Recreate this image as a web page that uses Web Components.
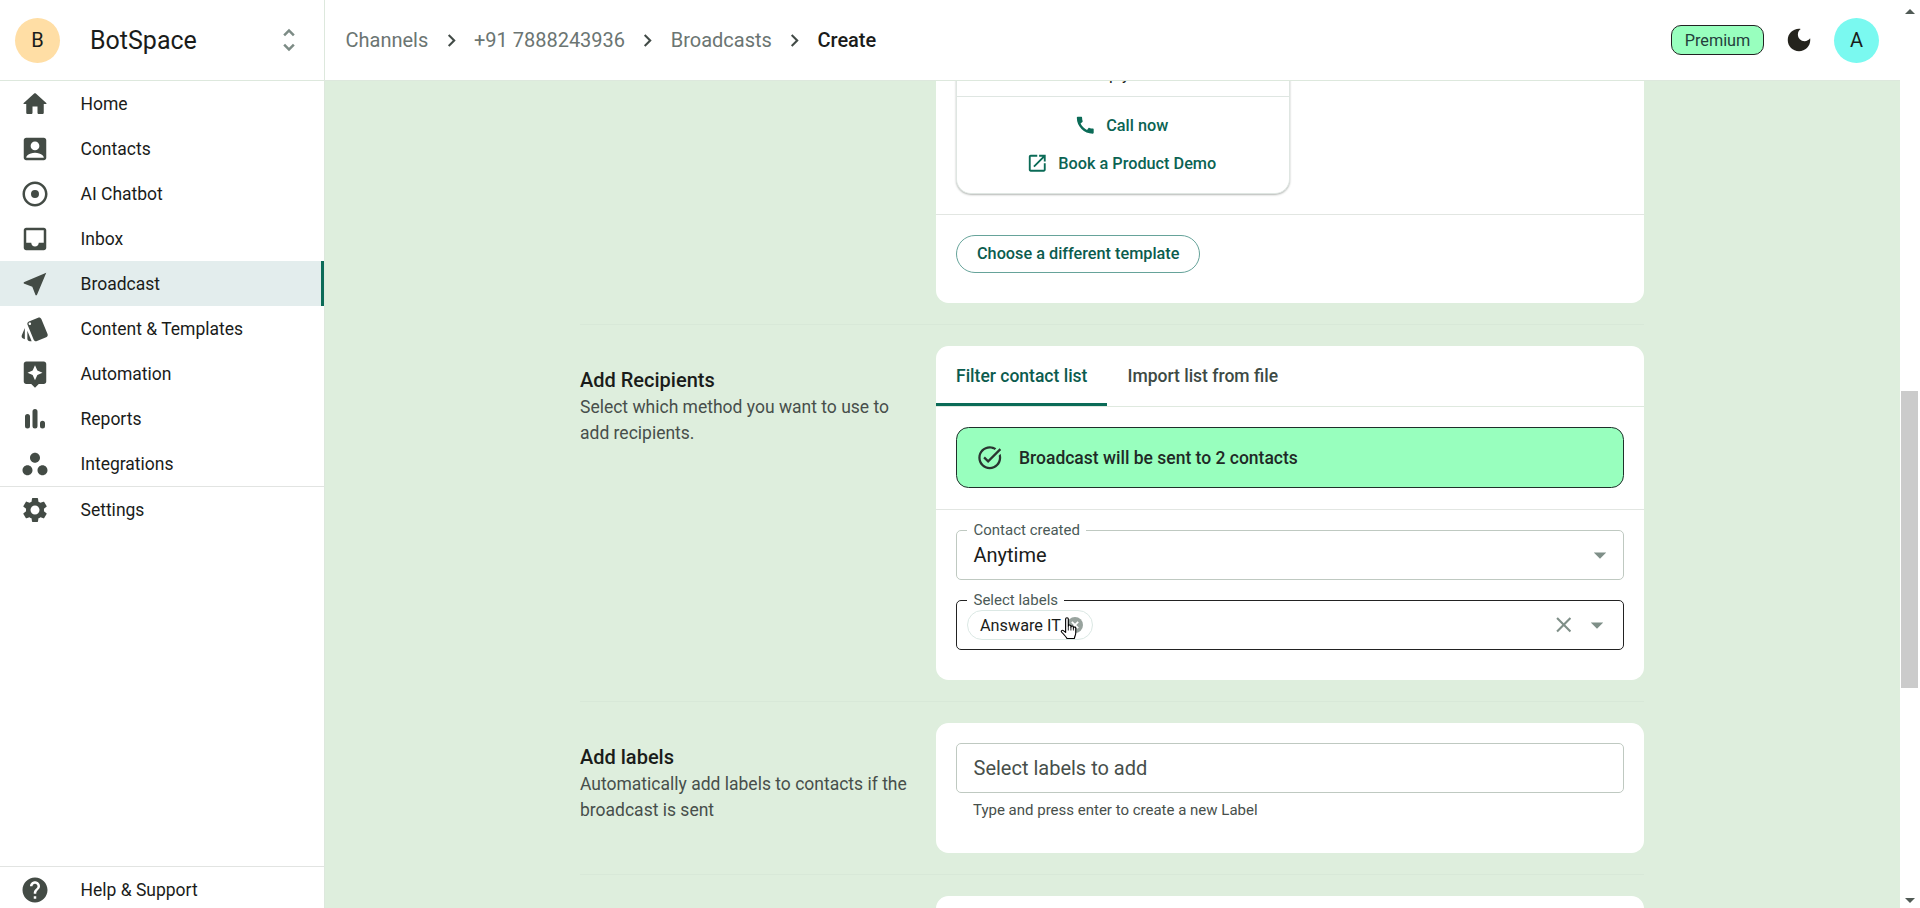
<!DOCTYPE html>
<html lang="en">
<head>
<meta charset="utf-8">
<title>BotSpace</title>
<style>
  html, body { margin: 0; height: 100%; overflow: hidden; }
  body { font-family: Roboto, "Liberation Sans", sans-serif; color: #1a1c1a; background: #fff; }
</style>
</head>
<body>
<bs-app>
  <bs-sidebar slot="sidebar"></bs-sidebar>
  <bs-topbar slot="topbar"></bs-topbar>
  <bs-scrollbar slot="scrollbar"></bs-scrollbar>

  <bs-section first>
    <bs-card flush>
      <bs-template-preview></bs-template-preview>
      <bs-divider></bs-divider>
      <bs-pad top="20" bottom="30"><bs-outline-button>Choose a different template</bs-outline-button></bs-pad>
    </bs-card>
  </bs-section>

  <bs-section heading="Add Recipients" description="Select which method you want to use to add recipients.">
    <bs-card>
      <bs-tabs></bs-tabs>
      <bs-pad top="20" bottom="21"><bs-banner>Broadcast will be sent to 2 contacts</bs-banner></bs-pad>
      <bs-divider></bs-divider>
      <bs-pad top="20" bottom="30">
        <bs-field label="Contact created" value="Anytime" arrow></bs-field>
        <bs-field label="Select labels" arrow clear focused spaced>
          <bs-chip>Answare IT</bs-chip>
        </bs-field>
      </bs-pad>
    </bs-card>
  </bs-section>

  <bs-section heading="Add labels" description="Automatically add labels to contacts if the broadcast is sent">
    <bs-card>
      <bs-pad top="20" bottom="33">
        <bs-field placeholder="Select labels to add" hint="Type and press enter to create a new Label"></bs-field>
      </bs-pad>
    </bs-card>
  </bs-section>

  <bs-section>
    <bs-card tall></bs-card>
  </bs-section>
</bs-app>

<script>
// Material icon paths, all on a 24 box
const ICONS = {
  home: "M10 19v-5h4v5c0 .55.45 1 1 1h3c.55 0 1-.45 1-1v-7h1.7c.46 0 .68-.57.33-.87L12.67 3.6c-.38-.34-.96-.34-1.34 0l-8.36 7.53c-.34.3-.13.87.33.87H5v7c0 .55.45 1 1 1h3c.55 0 1-.45 1-1z",
  contacts: "M19 3H5c-1.1 0-2 .9-2 2v14c0 1.1.9 2 2 2h14c1.1 0 2-.9 2-2V5c0-1.1-.9-2-2-2zm-7 3c1.93 0 3.5 1.57 3.5 3.5S13.93 13 12 13s-3.5-1.57-3.5-3.5S10.07 6 12 6zm7 13H5v-.23c0-.62.28-1.2.76-1.58C7.47 15.82 9.64 15 12 15s4.53.82 6.24 2.19c.48.38.76.97.76 1.58V19z",
  chatbot: "M12 8.8a3.2 3.2 0 1 0 0 6.4 3.2 3.2 0 0 0 0-6.4zM12 2C6.48 2 2 6.48 2 12s4.48 10 10 10 10-4.48 10-10S17.52 2 12 2zm0 18c-4.42 0-8-3.58-8-8s3.58-8 8-8 8 3.58 8 8-3.58 8-8 8z",
  inbox: "M19 3H4.99c-1.11 0-1.98.89-1.98 2L3 19c0 1.1.88 2 1.99 2H19c1.1 0 2-.9 2-2V5c0-1.11-.9-2-2-2zm0 12h-4c0 1.66-1.35 3-3 3s-3-1.34-3-3H4.99V5H19v10z",
  broadcast: "M21 3L3 10.53v.98l6.84 2.65L12.48 21h.98L21 3z",
  templates: "M2.53 19.65l1.34.56v-9.03l-2.43 5.86c-.41 1.02.08 2.19 1.09 2.61zm19.5-3.7L17.07 3.98c-.31-.75-1.04-1.21-1.81-1.23-.26 0-.53.04-.79.15L7.1 5.95c-.75.31-1.21 1.03-1.23 1.8-.01.27.04.54.15.8l4.96 11.97c.31.76 1.05 1.22 1.83 1.23.26 0 .52-.05.77-.15l7.36-3.05c1.02-.42 1.51-1.59 1.09-2.6zM7.88 8.75c-.55 0-1-.45-1-1s.45-1 1-1 1 .45 1 1-.45 1-1 1zm-2 11c0 1.1.9 2 2 2h1.45l-3.45-8.34v6.34z",
  automation: "M19 2H5c-1.1 0-2 .9-2 2v14c0 1.1.9 2 2 2h4l3 3 3-3h4c1.1 0 2-.9 2-2V4c0-1.1-.9-2-2-2zm-5.12 10.88L12 17l-1.88-4.12L6 11l4.12-1.88L12 5l1.88 4.12L18 11l-4.12 1.88z",
  reports: "M4 10a2 2 0 0 1 4 0v7.5a2 2 0 0 1-4 0zM10 6a2 2 0 0 1 4 0v11.5a2 2 0 0 1-4 0zM16 15.3a2 2 0 0 1 4 0v2.2a2 2 0 0 1-4 0z",
  integrations: "M6 13c-2.2 0-4 1.8-4 4s1.8 4 4 4 4-1.8 4-4-1.8-4-4-4zm6-10C9.8 3 8 4.8 8 7s1.8 4 4 4 4-1.8 4-4-1.8-4-4-4zm6 10c-2.2 0-4 1.8-4 4s1.8 4 4 4 4-1.8 4-4-1.8-4-4-4z",
  settings: "M19.14 12.94c.04-.3.06-.61.06-.94 0-.32-.02-.64-.07-.94l2.03-1.58c.18-.14.23-.41.12-.61l-1.92-3.32c-.12-.22-.37-.29-.59-.22l-2.39.96c-.5-.38-1.03-.7-1.62-.94l-.36-2.54c-.04-.24-.24-.41-.48-.41h-3.84c-.24 0-.43.17-.47.41l-.36 2.54c-.59.24-1.13.57-1.62.94l-2.39-.96c-.22-.08-.47 0-.59.22L2.74 8.87c-.12.21-.08.47.12.61l2.03 1.58c-.05.3-.09.63-.09.94s.02.64.07.94l-2.03 1.58c-.18.14-.23.41-.12.61l1.92 3.32c.12.22.37.29.59.22l2.39-.96c.5.38 1.03.7 1.62.94l.36 2.54c.05.24.24.41.48.41h3.84c.24 0 .44-.17.47-.41l.36-2.54c.59-.24 1.13-.56 1.62-.94l2.39.96c.22.08.47 0 .59-.22l1.92-3.32c.12-.22.07-.47-.12-.61l-2.01-1.58zM12 15.6c-1.98 0-3.6-1.62-3.6-3.6s1.62-3.6 3.6-3.6 3.6 1.62 3.6 3.6-1.62 3.6-3.6 3.6z",
  help: "M12 2C6.48 2 2 6.48 2 12s4.48 10 10 10 10-4.48 10-10S17.52 2 12 2zm1 17h-2v-2h2v2zm2.07-7.75l-.9.92C13.45 12.9 13 13.5 13 15h-2v-.5c0-1.1.45-2.1 1.17-2.83l1.24-1.26c.37-.36.59-.86.59-1.41 0-1.1-.9-2-2-2s-2 .9-2 2H8c0-2.21 1.79-4 4-4s4 1.79 4 4c0 .88-.36 1.68-.93 2.25z",
  unfold: "M12 5.83L15.17 9l1.41-1.41L12 3 7.41 7.59 8.83 9 12 5.83zm0 12.34L8.83 15l-1.41 1.41L12 21l4.59-4.59L15.17 15 12 18.17z",
  chevron: "M10 6L8.59 7.41 13.17 12l-4.58 4.59L10 18l6-6z",
  moon: "M12 3c-4.97 0-9 4.03-9 9s4.03 9 9 9 9-4.03 9-9c0-.46-.04-.92-.1-1.36-.98 1.37-2.58 2.26-4.4 2.26-2.98 0-5.4-2.42-5.4-5.4 0-1.81.89-3.42 2.26-4.4-.44-.06-.9-.1-1.36-.1z",
  call: "M20.01 15.38c-1.23 0-2.42-.2-3.53-.56-.35-.12-.74-.03-1.01.24l-1.57 1.97c-2.83-1.35-5.48-3.9-6.89-6.83l1.95-1.66c.27-.28.35-.67.24-1.02-.37-1.11-.56-2.3-.56-3.53 0-.54-.45-.99-.99-.99H4.19C3.65 3 3 3.24 3 3.99 3 13.28 10.73 21 20.01 21c.71 0 .99-.63.99-1.18v-3.45c0-.54-.45-.99-.99-.99z",
  open: "M19 19H5V5h7V3H5c-1.11 0-2 .9-2 2v14c0 1.1.89 2 2 2h14c1.1 0 2-.9 2-2v-7h-2v7zM14 3v2h3.59l-9.83 9.83 1.41 1.41L19 6.41V10h2V3h-7z",
  taskAlt: "M22 5.18L10.59 16.6l-4.24-4.24 1.41-1.41 2.83 2.83 10-10L22 5.18zm-2.21 5.04c.13.57.21 1.17.21 1.78 0 4.42-3.58 8-8 8s-8-3.58-8-8 3.58-8 8-8c1.58 0 3.04.46 4.28 1.25l1.44-1.44C16.1 2.67 14.13 2 12 2 6.48 2 2 6.48 2 12s4.48 10 10 10 10-4.48 10-10c0-1.19-.22-2.33-.6-3.39l-1.61 1.61z",
  close: "M19 6.41L17.59 5 12 10.59 6.41 5 5 6.41 10.59 12 5 17.59 6.41 19 12 13.41 17.59 19 19 17.59 13.41 12z",
  arrowDown: "M7 10l5 5 5-5z"
};

class BsIcon extends HTMLElement {
  connectedCallback() {
    if (this.shadowRoot) return;
    this.attachShadow({ mode: "open" });
    const size = this.getAttribute("size") || 30;
    const color = this.getAttribute("color") || "currentColor";
    this.shadowRoot.innerHTML = `
      <style>
        :host { display: inline-flex; flex: none; line-height: 0; }
      </style>
      <svg width="${size}" height="${size}" viewBox="0 0 24 24" fill="${color}"><path d="${ICONS[this.getAttribute("name")]}"/></svg>
    `;
  }
}
customElements.define("bs-icon", BsIcon);

class BsAvatar extends HTMLElement {
  connectedCallback() {
    this.attachShadow({ mode: "open" });
    this.shadowRoot.innerHTML = `
      <style>
        :host {
          display: flex; flex: none; align-items: center; justify-content: center;
          width: 45px; height: 45px; border-radius: 50%;
          font-size: 20px; color: #1a1c1a;
          background: ${this.getAttribute("color")};
        }
      </style>
      <slot></slot>
    `;
  }
}
customElements.define("bs-avatar", BsAvatar);

class BsNavItem extends HTMLElement {
  connectedCallback() {
    this.attachShadow({ mode: "open" });
    this.shadowRoot.innerHTML = `
      <style>
        :host {
          display: flex; align-items: center; box-sizing: border-box;
          height: 45px; flex: none; padding-left: 20px;
          font-size: 17.5px; color: #1a1c1a;
        }
        :host([active]) { background: #e3eded; border-right: 3px solid #0b6b57; }
        bs-icon { margin-right: 30.5px; }
      </style>
      <bs-icon name="${this.getAttribute("icon")}" color="#434b45"></bs-icon>
      <slot></slot>
    `;
  }
}
customElements.define("bs-nav-item", BsNavItem);

class BsSidebar extends HTMLElement {
  connectedCallback() {
    this.attachShadow({ mode: "open" });
    this.shadowRoot.innerHTML = `
      <style>
        :host {
          display: flex; flex-direction: column; box-sizing: border-box;
          height: 100%; overflow: hidden; background: #fff;
          border-right: 1px solid #dde8dd;
        }
        .brand {
          display: flex; align-items: center; flex: none; box-sizing: border-box;
          height: 81px; padding: 0 20px 0 15px; border-bottom: 1px solid #dde8dd;
        }
        .name { flex: 1; margin-left: 30px; font-size: 25px; color: #1a1c1a; }
        nav { display: flex; flex-direction: column; flex: 1; }
        .rule { flex: none; height: 1px; background: #e2e4e2; }
        .foot { flex: none; height: 42px; border-top: 1px solid #e2e4e2; box-sizing: border-box; }
      </style>
      <div class="brand">
        <bs-avatar color="#ffdea5">B</bs-avatar>
        <span class="name">BotSpace</span>
        <bs-icon name="unfold" color="#7c8b85"></bs-icon>
      </div>
      <nav>
        <bs-nav-item icon="home">Home</bs-nav-item>
        <bs-nav-item icon="contacts">Contacts</bs-nav-item>
        <bs-nav-item icon="chatbot">AI Chatbot</bs-nav-item>
        <bs-nav-item icon="inbox">Inbox</bs-nav-item>
        <bs-nav-item icon="broadcast" active>Broadcast</bs-nav-item>
        <bs-nav-item icon="templates">Content &amp; Templates</bs-nav-item>
        <bs-nav-item icon="automation">Automation</bs-nav-item>
        <bs-nav-item icon="reports">Reports</bs-nav-item>
        <bs-nav-item icon="integrations">Integrations</bs-nav-item>
        <div class="rule"></div>
        <bs-nav-item icon="settings">Settings</bs-nav-item>
      </nav>
      <div class="foot"><bs-nav-item icon="help">Help &amp; Support</bs-nav-item></div>
    `;
  }
}
customElements.define("bs-sidebar", BsSidebar);

class BsTopbar extends HTMLElement {
  connectedCallback() {
    this.attachShadow({ mode: "open" });
    const chevron = `<bs-icon name="chevron" size="25" color="#424b47"></bs-icon>`;
    this.shadowRoot.innerHTML = `
      <style>
        :host {
          display: flex; align-items: center; box-sizing: border-box;
          height: 81px; padding: 0 21px 0 20.5px; background: #fff;
          border-bottom: 1px solid #dde8dd; font-size: 20px;
        }
        .crumbs { display: flex; align-items: center; flex: 1; gap: 10.3px; color: #6b7572; }
        .current { color: #1a1c1a; font-weight: 500; }
        .premium {
          display: flex; align-items: center; justify-content: center; box-sizing: border-box;
          width: 93px; height: 30px; margin-right: 20px;
          border: 1px solid #222; border-radius: 10px;
          background: #98ffbe; font-size: 16.25px; color: #24403c;
        }
        bs-icon { flex: none; }
        .moon { margin-right: 20px; }
      </style>
      <div class="crumbs">
        <span>Channels</span>${chevron}
        <span>+91 7888243936</span>${chevron}
        <span>Broadcasts</span>${chevron}
        <span class="current">Create</span>
      </div>
      <div class="premium">Premium</div>
      <bs-icon class="moon" name="moon" color="#24231c"></bs-icon>
      <bs-avatar color="#7af9f0">A</bs-avatar>
    `;
  }
}
customElements.define("bs-topbar", BsTopbar);

// The window's own scrollbar, drawn because the page itself does not scroll
class BsScrollbar extends HTMLElement {
  connectedCallback() {
    this.attachShadow({ mode: "open" });
    this.shadowRoot.innerHTML = `
      <style>
        :host { display: flex; flex-direction: column; height: 100%; background: #fff; }
        .arrow { display: flex; justify-content: center; align-items: center; height: 23px; flex: none; }
        .arrow.down { height: 16px; }
        .track { flex: 1; padding: 368px 2px 0 1px; }
        .thumb { height: 297px; background: #cbcbcb; }
        .arrow i { width: 0; height: 0; border: 5px solid transparent; border-top: 0; border-bottom: 5px solid #505a55; }
        .arrow.down i { border-bottom: 0; border-top: 5px solid #505a55; }
      </style>
      <div class="arrow"><i></i></div>
      <div class="track"><div class="thumb"></div></div>
      <div class="arrow down"><i></i></div>
    `;
  }
}
customElements.define("bs-scrollbar", BsScrollbar);

class BsApp extends HTMLElement {
  connectedCallback() {
    this.attachShadow({ mode: "open" });
    this.shadowRoot.innerHTML = `
      <style>
        :host {
          display: grid; height: 100vh; overflow: hidden;
          grid-template-columns: 325px 1575px 20px;
          grid-template-rows: 81px 827px;
        }
        .side { grid-column: 1; grid-row: 1 / 3; min-height: 0; }
        .top { grid-column: 2; grid-row: 1; }
        .bar { grid-column: 3; grid-row: 1 / 3; min-height: 0; }
        main { grid-column: 2; grid-row: 2; overflow: hidden; background: #deeedd; min-height: 0; }
        .column { width: 1064px; margin-left: 255px; }
      </style>
      <div class="side"><slot name="sidebar"></slot></div>
      <div class="top"><slot name="topbar"></slot></div>
      <div class="bar"><slot name="scrollbar"></slot></div>
      <main><div class="column"><slot></slot></div></main>
    `;
  }
}
customElements.define("bs-app", BsApp);

class BsSection extends HTMLElement {
  connectedCallback() {
    this.attachShadow({ mode: "open" });
    const heading = this.getAttribute("heading");
    this.shadowRoot.innerHTML = `
      <style>
        :host {
          display: grid; grid-template-columns: 356px 708px;
          padding: 21px 0 21px; border-bottom: 1px solid #d8e8d8;
        }
        :host([first]) { margin-top: -30px; padding-top: 0; }
        .info { padding-top: 21px; }
        h3 { margin: 0 0 2px; font-size: 20px; line-height: 26px; font-weight: 500; color: #1a1c1a; }
        p { margin: 0; width: 340px; font-size: 17.5px; line-height: 25.5px; color: #474f4b; }
      </style>
      <div class="info">
        ${heading ? `<h3>${heading}</h3><p>${this.getAttribute("description")}</p>` : ""}
      </div>
      <div><slot></slot></div>
    `;
  }
}
customElements.define("bs-section", BsSection);

class BsCard extends HTMLElement {
  connectedCallback() {
    this.attachShadow({ mode: "open" });
    this.shadowRoot.innerHTML = `
      <style>
        :host { display: block; background: #fff; border-radius: 12.5px; overflow: hidden; }
        :host([flush]) { border-radius: 0 0 12.5px 12.5px; }
        :host([tall]) { height: 200px; }
      </style>
      <slot></slot>
    `;
  }
}
customElements.define("bs-card", BsCard);

class BsPad extends HTMLElement {
  connectedCallback() {
    this.attachShadow({ mode: "open" });
    this.shadowRoot.innerHTML = `
      <style>
        :host {
          display: block;
          padding: ${this.getAttribute("top")}px 20px ${this.getAttribute("bottom")}px;
        }
      </style>
      <slot></slot>
    `;
  }
}
customElements.define("bs-pad", BsPad);

class BsDivider extends HTMLElement {
  connectedCallback() {
    this.attachShadow({ mode: "open" });
    this.shadowRoot.innerHTML = `<style>:host { display: block; height: 1px; background: #e2e6e2; }</style>`;
  }
}
customElements.define("bs-divider", BsDivider);

class BsTemplatePreview extends HTMLElement {
  connectedCallback() {
    this.attachShadow({ mode: "open" });
    this.shadowRoot.innerHTML = `
      <style>
        :host { display: block; padding: 0 20px 20px; }
        .phone {
          width: 334px; box-sizing: border-box; background: #fff;
          border: 1px solid #dfe6e2; border-top: 0; border-radius: 0 0 15px 15px;
          box-shadow: 0 1px 2px rgba(40, 50, 40, .35);
        }
        .reply {
          display: flex; align-items: center; justify-content: center; box-sizing: border-box;
          height: 46px; padding: 2px 26px 0 0; border-bottom: 1px solid #dfe6e2;
          font-size: 16.25px; color: #1a1c1a;
        }
        .actions { padding: 9px 4px 11px 0; }
        .action {
          display: flex; align-items: center; justify-content: center; gap: 10px;
          height: 38px; font-size: 16.25px; font-weight: 500; color: #0b6353;
        }
      </style>
      <div class="phone">
        <div class="reply">Reply</div>
        <div class="actions">
          <div class="action"><bs-icon name="call" size="22.5" color="#0b6b57"></bs-icon>Call now</div>
          <div class="action"><bs-icon name="open" size="22.5" color="#0b6b57"></bs-icon>Book a Product Demo</div>
        </div>
      </div>
    `;
  }
}
customElements.define("bs-template-preview", BsTemplatePreview);

class BsOutlineButton extends HTMLElement {
  connectedCallback() {
    this.attachShadow({ mode: "open" });
    this.shadowRoot.innerHTML = `
      <style>
        :host {
          display: inline-flex; align-items: center; box-sizing: border-box; vertical-align: top;
          height: 38px; padding: 0 20px 2px;
          border: 1px solid #66a39a; border-radius: 19px;
          font-size: 16.25px; font-weight: 500; color: #0b5c4e;
        }
      </style>
      <slot></slot>
    `;
  }
}
customElements.define("bs-outline-button", BsOutlineButton);

class BsTabs extends HTMLElement {
  connectedCallback() {
    this.attachShadow({ mode: "open" });
    this.shadowRoot.innerHTML = `
      <style>
        :host { display: flex; height: 61px; box-sizing: border-box; border-bottom: 1px solid #dfe9df; }
        .tab {
          display: flex; align-items: center; box-sizing: border-box;
          height: 60px; padding: 2px 20px 0; margin-bottom: -1px;
          font-size: 17.5px; font-weight: 500; color: #3d4a45;
          border-bottom: 3px solid transparent;
        }
        .tab.on { color: #0b5c4e; border-bottom-color: #0b6b57; }
      </style>
      <div class="tab on">Filter contact list</div>
      <div class="tab">Import list from file</div>
    `;
  }
}
customElements.define("bs-tabs", BsTabs);

class BsBanner extends HTMLElement {
  connectedCallback() {
    this.attachShadow({ mode: "open" });
    this.shadowRoot.innerHTML = `
      <style>
        :host {
          display: flex; align-items: center; box-sizing: border-box;
          height: 61px; padding-left: 19px;
          background: #98ffbe; border: 1px solid #1f2f2a; border-radius: 12.5px;
          font-size: 17.5px; font-weight: 500; color: #1f2a26;
        }
        bs-icon { margin-right: 15.5px; }
      </style>
      <bs-icon name="taskAlt" size="27.5" color="#2a3531"></bs-icon>
      <slot></slot>
    `;
  }
}
customElements.define("bs-banner", BsBanner);

class BsChip extends HTMLElement {
  connectedCallback() {
    this.attachShadow({ mode: "open" });
    this.shadowRoot.innerHTML = `
      <style>
        :host {
          display: inline-flex; align-items: center; position: relative; box-sizing: border-box;
          height: 30px; padding: 0 8px 0 12.5px; gap: 5px;
          border: 1px solid #dbe8e4; border-radius: 15px;
          font-size: 16.25px; color: #1a1c1a;
        }
        .remove { display: block; flex: none; }
        .hand { position: absolute; left: 92px; top: 6px; }
      </style>
      <slot></slot>
      <svg class="remove" width="18" height="18" viewBox="0 0 18 18">
        <circle cx="9" cy="9" r="8" fill="#98a39e"/>
        <path d="M5.8 5.8l6.4 6.4M12.2 5.8l-6.4 6.4" stroke="#fff" stroke-width="1.8"/>
      </svg>
      <svg class="hand" width="18" height="23" viewBox="0 0 16 23" preserveAspectRatio="none">
        <path d="M5 2c0-1.6 2.4-1.6 2.4 0v7c0-1.4 2.3-1.4 2.3 0v1c0-1.3 2.2-1.3 2.2 0v1c0-1.2 2.1-1.2 2.1 0v5c0 2-1 3.2-1.2 5.5H6.2C5.6 20 3.4 17.5 1.4 15c-.9-1.1.6-2.3 1.6-1.4L5 15.4z" fill="#fff" stroke="#000" stroke-width="1" stroke-linejoin="round"/>
        <path d="M7.4 9v4.5M9.7 10v3.5M11.9 11v2.5" stroke="#000" stroke-width=".8" fill="none"/>
      </svg>
    `;
  }
}
customElements.define("bs-chip", BsChip);

class BsField extends HTMLElement {
  connectedCallback() {
    this.attachShadow({ mode: "open" });
    const label = this.getAttribute("label");
    const value = this.getAttribute("value");
    const placeholder = this.getAttribute("placeholder");
    const hint = this.getAttribute("hint");
    this.shadowRoot.innerHTML = `
      <style>
        :host { display: block; }
        :host([spaced]) { margin-top: 20px; }
        fieldset {
          display: flex; align-items: center; box-sizing: border-box;
          height: 50px; width: 668px; margin: 0; padding: 0 8.5px 0 9.5px; min-width: 0;
          border: 1px solid #bfc9c1; border-radius: 5px;
        }
        :host([focused]) fieldset { border-color: #222; padding-right: 11px; }
        legend {
          height: 0; margin-left: 0; padding: 0 6px 0 7px;
          font-size: 15px; line-height: 0; color: #4b5a57;
          transform: translateY(-1px);
        }
        .value { flex: 1; display: flex; align-items: center; min-width: 0; font-size: 20px; padding-left: 7px; color: #1a1c1a; }
        :host([focused]) .value { padding-left: 0; }
        .placeholder { color: #474f4b; }
        .clear { margin-right: 5.5px; }
        .hint { margin: 8px 0 0 17px; font-size: 15px; line-height: 19px; color: #474f4b; }
      </style>
      <fieldset>
        ${label ? `<legend>${label}</legend>` : ""}
        <div class="value">
          ${value ? value : ""}
          ${placeholder ? `<span class="placeholder">${placeholder}</span>` : ""}
          <slot></slot>
        </div>
        ${this.hasAttribute("clear") ? `<bs-icon class="clear" name="close" size="25.5" color="#7f8f88"></bs-icon>` : ""}
        ${this.hasAttribute("arrow") ? `<bs-icon name="arrowDown" size="30" color="#7f8f88"></bs-icon>` : ""}
      </fieldset>
      ${hint ? `<p class="hint">${hint}</p>` : ""}
    `;
  }
}
customElements.define("bs-field", BsField);
</script>
</body>
</html>
